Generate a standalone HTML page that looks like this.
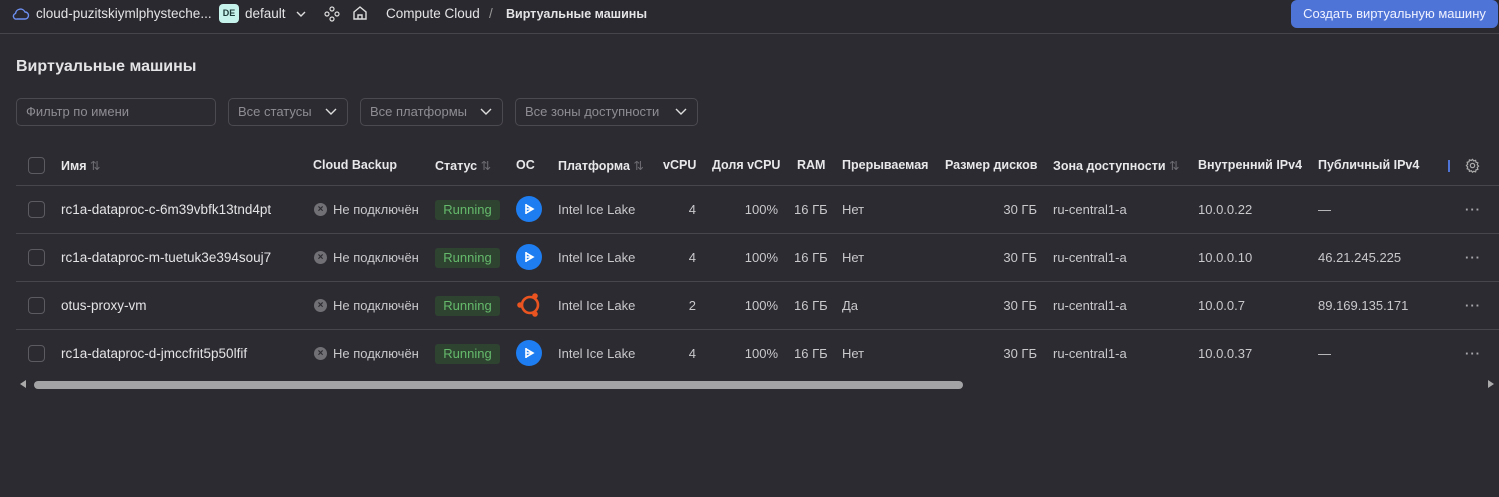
<!DOCTYPE html>
<html><head><meta charset="utf-8"><style>
*{box-sizing:border-box;margin:0;padding:0}
body{width:1499px;height:497px;background:#2c2b31;font-family:"Liberation Sans",sans-serif;color:#e4e4e6;font-size:13px;position:relative;overflow:hidden}
.a{position:absolute;white-space:nowrap}
.top{position:absolute;left:0;top:0;width:1499px;height:34px;border-bottom:1px solid #46454b;background:#2a292f}
.btn{position:absolute;left:1291px;top:0;width:207px;height:28px;background:#4f74d8;border-radius:6px;color:#f0f3ff;font-size:13px;text-align:center;line-height:28px}
.h{font-weight:bold;color:#e8e8ea;font-size:12.5px;top:158px}
.sel{position:absolute;top:98px;height:28px;border:1px solid #4b4a50;border-radius:5px;color:#8e8d93;font-size:13px;line-height:26px;padding-left:9px}
.sel svg{position:absolute;right:10px;top:9px}
.cb{position:absolute;left:28px;width:17px;height:17px;border:1px solid #5c5b61;border-radius:4px}
.line{position:absolute;left:16px;width:1483px;height:1px;background:#47464c}
.x{position:absolute;width:13px;height:13px;border-radius:50%;background:#707075;color:#2c2b31;font-size:10px;text-align:center;line-height:13px;font-weight:bold}
.run{position:absolute;left:435px;width:65px;height:20px;background:#2f4331;color:#64b96b;border-radius:3px;text-align:center;line-height:20px}
.os{position:absolute;left:516px;width:26px;height:26px;border-radius:50%;background:#1e7df0}
.g{color:#c9c9cc}
.r{text-align:right}
.dots{color:#a7a7ab;letter-spacing:1px;font-weight:bold}
.n{font-size:13.5px;line-height:15px}
</style></head><body>
<div class="top"></div>
<svg class="a" style="left:12px;top:6px" width="18" height="16" viewBox="0 0 18 16"><path d="M5 13h8a3.5 3.5 0 0 0 0-7 5 5 0 0 0-9.5 1.5A2.8 2.8 0 0 0 5 13z" fill="none" stroke="#6c8ff0" stroke-width="1.4"/></svg>
<div class="a" style="left:36px;top:6px;font-size:13.5px">cloud-puzitskiymlphysteche...</div>
<div class="a" style="left:219px;top:4px;width:20px;height:19px;background:#c6f3ec;color:#1e3a38;border-radius:4px;font-size:9px;font-weight:bold;text-align:center;line-height:19px">DE</div>
<div class="a" style="left:245px;top:6px;font-size:13.5px">default</div>
<svg class="a" style="left:295px;top:9px" width="12" height="10"><path d="M2 3l4 4 4-4" fill="none" stroke="#ddd" stroke-width="1.4"/></svg>
<svg class="a" style="left:323px;top:5px" width="18" height="18" viewBox="0 0 18 18" fill="none" stroke="#ddd" stroke-width="1.2"><circle cx="9" cy="4" r="2"/><circle cx="4" cy="9" r="2"/><circle cx="14" cy="9" r="2"/><circle cx="9" cy="14" r="2"/></svg>
<svg class="a" style="left:351px;top:4px" width="18" height="18" viewBox="0 0 18 18" fill="none" stroke="#ddd" stroke-width="1.4"><path d="M3 8l6-5 6 5v7H3z"/><path d="M7 15v-4h4v4"/></svg>
<div class="a" style="left:386px;top:6px;font-size:13.5px">Compute Cloud</div>
<div class="a" style="left:489px;top:6px;font-size:13.5px;color:#999">/</div>
<div class="a" style="left:506px;top:7px;font-size:12.5px;font-weight:bold">Виртуальные машины</div>
<div class="btn">Создать виртуальную машину</div>

<div class="a" style="left:16px;top:58px;font-size:16px;font-weight:bold">Виртуальные машины</div>
<div class="sel" style="left:16px;width:200px">Фильтр по имени</div>
<div class="sel" style="left:228px;width:120px">Все статусы<svg width="12" height="8"><path d="M1 1l5 5 5-5" fill="none" stroke="#ddd" stroke-width="1.4"/></svg></div>
<div class="sel" style="left:360px;width:143px">Все платформы<svg width="12" height="8"><path d="M1 1l5 5 5-5" fill="none" stroke="#ddd" stroke-width="1.4"/></svg></div>
<div class="sel" style="left:515px;width:183px">Все зоны доступности<svg width="12" height="8"><path d="M1 1l5 5 5-5" fill="none" stroke="#ddd" stroke-width="1.4"/></svg></div>

<div class="cb" style="top:157px"></div>
<div class="a h" style="left:61px">Имя <span style="color:#6e6d73;font-weight:normal">⇅</span></div>
<div class="a h" style="left:313px">Cloud Backup</div>
<div class="a h" style="left:435px">Статус <span style="color:#6e6d73;font-weight:normal">⇅</span></div>
<div class="a h" style="left:516px">ОС</div>
<div class="a h" style="left:558px">Платформа <span style="color:#6e6d73;font-weight:normal">⇅</span></div>
<div class="a h" style="left:663px">vCPU</div>
<div class="a h" style="left:712px">Доля vCPU</div>
<div class="a h" style="left:797px">RAM</div>
<div class="a h" style="left:842px">Прерываемая</div>
<div class="a h" style="left:945px">Размер дисков</div>
<div class="a h" style="left:1053px">Зона доступности <span style="color:#6e6d73;font-weight:normal">⇅</span></div>
<div class="a h" style="left:1198px">Внутренний IPv4</div>
<div class="a h" style="left:1318px">Публичный IPv4</div>
<div class="a" style="left:1448px;top:160px;width:2px;height:12px;background:#4f74d8"></div>
<svg class="a" style="left:1465px;top:158px" width="15" height="15" viewBox="0 0 16 16" fill="none" stroke="#aaa" stroke-width="1.3"><circle cx="8" cy="8" r="2.3"/><path d="M8 1.5l1.3 1.6 2-.6.4 2 2 .7-.6 2 1.4 1.5-1.4 1.4.6 2-2 .6-.4 2.1-2-.6L8 15.2l-1.3-1.6-2 .6-.4-2-2-.7.6-2L1.5 8l1.4-1.4-.6-2 2-.6.4-2 2 .6z"/></svg>
<div class="line" style="top:185px"></div>
<div class="line" style="top:233px"></div>
<div class="line" style="top:281px"></div>
<div class="line" style="top:329px"></div>

<div class="cb" style="top:201px"></div><div class="cb" style="top:249px"></div><div class="cb" style="top:297px"></div><div class="cb" style="top:345px"></div>
<div class="a n" style="left:61px;top:202px">rc1a-dataproc-c-6m39vbfk13tnd4pt</div>
<div class="a n" style="left:61px;top:250px">rc1a-dataproc-m-tuetuk3e394souj7</div>
<div class="a n" style="left:61px;top:298px">otus-proxy-vm</div>
<div class="a n" style="left:61px;top:346px">rc1a-dataproc-d-jmccfrit5p50lfif</div>

<div class="x" style="left:314px;top:203px">×</div><div class="a g" style="left:333px;top:202px">Не подключён</div>
<div class="x" style="left:314px;top:251px">×</div><div class="a g" style="left:333px;top:250px">Не подключён</div>
<div class="x" style="left:314px;top:299px">×</div><div class="a g" style="left:333px;top:298px">Не подключён</div>
<div class="x" style="left:314px;top:347px">×</div><div class="a g" style="left:333px;top:346px">Не подключён</div>

<div class="run" style="top:200px">Running</div><div class="run" style="top:248px">Running</div><div class="run" style="top:296px">Running</div><div class="run" style="top:344px">Running</div>

<div class="os" style="top:196px"><svg width="26" height="26"><path d="M10 8v10M10 9l7 4-7 4M10 13h7" fill="none" stroke="#fff" stroke-width="1.6"/></svg></div>
<div class="os" style="top:244px"><svg width="26" height="26"><path d="M10 8v10M10 9l7 4-7 4M10 13h7" fill="none" stroke="#fff" stroke-width="1.6"/></svg></div>
<svg class="a" style="left:515px;top:291px" width="28" height="28"><circle cx="15" cy="14" r="8" fill="none" stroke="#e95420" stroke-width="2.6"/><circle cx="5" cy="14" r="2.8" fill="#e95420"/><circle cx="20" cy="5" r="2.8" fill="#e95420"/><circle cx="20" cy="23" r="2.8" fill="#e95420"/></svg>
<div class="os" style="top:340px"><svg width="26" height="26"><path d="M10 8v10M10 9l7 4-7 4M10 13h7" fill="none" stroke="#fff" stroke-width="1.6"/></svg></div>

<div class="a g" style="left:558px;top:202px">Intel Ice Lake</div><div class="a g" style="left:558px;top:250px">Intel Ice Lake</div><div class="a g" style="left:558px;top:298px">Intel Ice Lake</div><div class="a g" style="left:558px;top:346px">Intel Ice Lake</div>
<div class="a g r" style="left:660px;width:36px;top:202px">4</div><div class="a g r" style="left:660px;width:36px;top:250px">4</div><div class="a g r" style="left:660px;width:36px;top:298px">2</div><div class="a g r" style="left:660px;width:36px;top:346px">4</div>
<div class="a g r" style="left:720px;width:58px;top:202px">100%</div><div class="a g r" style="left:720px;width:58px;top:250px">100%</div><div class="a g r" style="left:720px;width:58px;top:298px">100%</div><div class="a g r" style="left:720px;width:58px;top:346px">100%</div>
<div class="a g" style="left:794px;top:202px">16 ГБ</div><div class="a g" style="left:794px;top:250px">16 ГБ</div><div class="a g" style="left:794px;top:298px">16 ГБ</div><div class="a g" style="left:794px;top:346px">16 ГБ</div>
<div class="a g" style="left:842px;top:202px">Нет</div><div class="a g" style="left:842px;top:250px">Нет</div><div class="a g" style="left:842px;top:298px">Да</div><div class="a g" style="left:842px;top:346px">Нет</div>
<div class="a g r" style="left:960px;width:77px;top:202px">30 ГБ</div><div class="a g r" style="left:960px;width:77px;top:250px">30 ГБ</div><div class="a g r" style="left:960px;width:77px;top:298px">30 ГБ</div><div class="a g r" style="left:960px;width:77px;top:346px">30 ГБ</div>
<div class="a g" style="left:1053px;top:202px">ru-central1-a</div><div class="a g" style="left:1053px;top:250px">ru-central1-a</div><div class="a g" style="left:1053px;top:298px">ru-central1-a</div><div class="a g" style="left:1053px;top:346px">ru-central1-a</div>
<div class="a g" style="left:1198px;top:202px">10.0.0.22</div><div class="a g" style="left:1198px;top:250px">10.0.0.10</div><div class="a g" style="left:1198px;top:298px">10.0.0.7</div><div class="a g" style="left:1198px;top:346px">10.0.0.37</div>
<div class="a g" style="left:1318px;top:202px">—</div><div class="a g" style="left:1318px;top:250px">46.21.245.225</div><div class="a g" style="left:1318px;top:298px">89.169.135.171</div><div class="a g" style="left:1318px;top:346px">—</div>
<div class="a dots" style="left:1465px;top:202px">···</div><div class="a dots" style="left:1465px;top:250px">···</div><div class="a dots" style="left:1465px;top:298px">···</div><div class="a dots" style="left:1465px;top:346px">···</div>

<div class="a" style="left:20px;top:380px;width:0;height:0;border-top:4px solid transparent;border-bottom:4px solid transparent;border-right:6px solid #aaa"></div>
<div class="a" style="left:34px;top:381px;width:929px;height:8px;border-radius:4px;background:#a3a3a5"></div>
<div class="a" style="left:1488px;top:380px;width:0;height:0;border-top:4px solid transparent;border-bottom:4px solid transparent;border-left:6px solid #aaa"></div>
</body></html>
